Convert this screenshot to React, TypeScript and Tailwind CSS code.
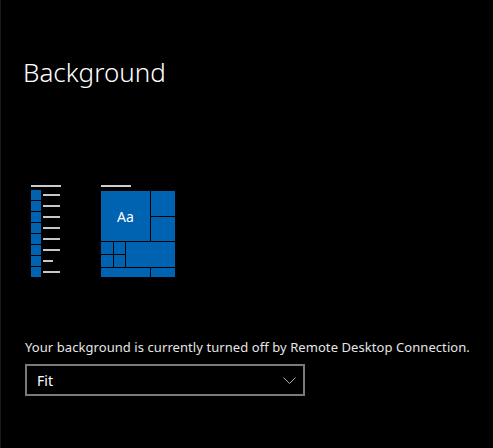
export default function App() {
  const font = { fontFamily: '"Noto Sans", "Open Sans", sans-serif' };
  const lines = [17, 17, 17, 17, 17, 17, 10, 17];
  return (
    <div className="w-[493px] h-[448px] bg-black overflow-hidden border-l border-[#1c1c1c] flex flex-col" style={font}>
      <h1 className="ml-[22px] mt-[54px] text-[26px] leading-[36px] font-light text-white">Background</h1>
      <div className="ml-[30px] mt-[95px] flex gap-[40px] items-start">
        <div className="w-[30px] flex flex-col">
          <div className="h-[2px] w-[30px] bg-[#cccccc] mb-[3px]" />
          <div className="flex flex-col gap-[1px]">
            {lines.map((w, i) => (
              <div key={i} className="flex items-center gap-[2px] h-[10px]">
                <div className="w-[10px] h-[10px] bg-[#0063b1] shrink-0" />
                <div className="h-[2px] bg-[#c8c8c8]" style={{ width: w }} />
              </div>
            ))}
          </div>
        </div>
        <div className="flex flex-col">
          <div className="h-[2px] w-[30px] bg-[#cccccc] mb-[4px]" />
          <div className="grid grid-cols-[12px_11px_24px_24px] grid-rows-[25px_24px_12px_12px_9px] gap-[1px] w-[74px] h-[86px]">
            <div className="col-span-3 row-span-2 bg-[#0063b1] flex items-center justify-center text-white text-[14px]">Aa</div>
            <div className="bg-[#0063b1]" />
            <div className="bg-[#0063b1]" />
            <div className="bg-[#0063b1]" />
            <div className="bg-[#0063b1]" />
            <div className="col-span-2 row-span-2 bg-[#0063b1]" />
            <div className="bg-[#0063b1]" />
            <div className="bg-[#0063b1]" />
            <div className="col-span-3 bg-[#0063b1]" />
            <div className="bg-[#0063b1]" />
          </div>
        </div>
      </div>
      <p className="ml-[24px] mt-[60px] text-[13px] leading-[20px] text-[#e6e6e6] whitespace-nowrap tracking-[0.07px]">Your background is currently turned off by Remote Desktop Connection.</p>
      <div className="ml-[24px] mt-[7px] w-[280px] h-[32px] border-2 border-[#7a7a7a] flex items-center justify-between pl-[10px] pr-[7px] text-[14px] text-white">
        <span>Fit</span>
        <svg width="13" height="7" viewBox="0 0 13 7" fill="none" stroke="#b3b3b3" strokeWidth="1"><path d="M0.5 0.5 L6.5 6.5 L12.5 0.5" /></svg>
      </div>
    </div>
  );
}
